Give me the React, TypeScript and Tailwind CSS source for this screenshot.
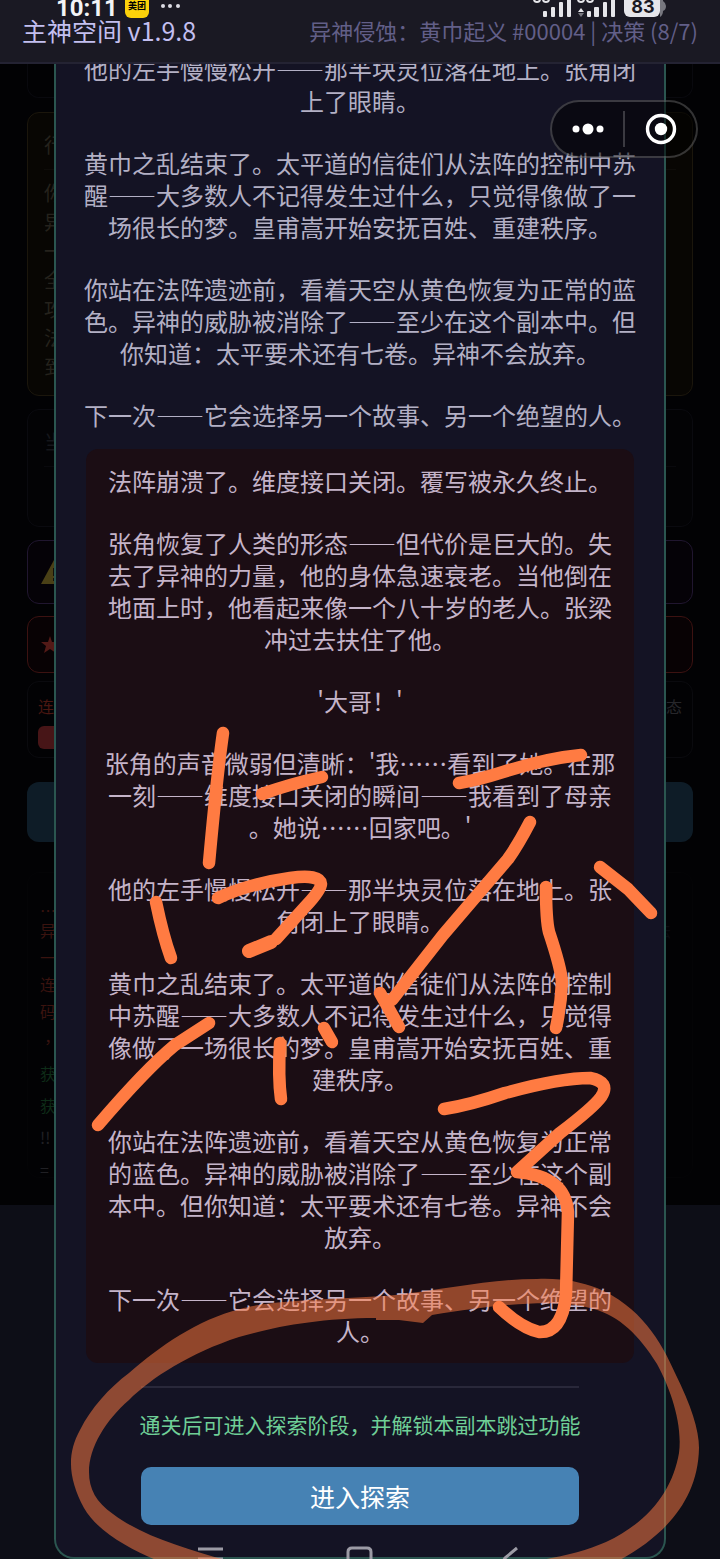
import React from 'react';

const EPILOGUE = [
  '他的左手慢慢松开——那半块灵位落在地上。张角闭上了眼睛。',
  '黄巾之乱结束了。太平道的信徒们从法阵的控制中苏醒——大多数人不记得发生过什么，只觉得像做了一场很长的梦。皇甫嵩开始安抚百姓、重建秩序。',
  '你站在法阵遗迹前，看着天空从黄色恢复为正常的蓝色。异神的威胁被消除了——至少在这个副本中。但你知道：太平要术还有七卷。异神不会放弃。',
  '下一次——它会选择另一个故事、另一个绝望的人。',
];

const ENDING = [
  '法阵崩溃了。维度接口关闭。覆写被永久终止。',
  '张角恢复了人类的形态——但代价是巨大的。失去了异神的力量，他的身体急速衰老。当他倒在地面上时，他看起来像一个八十岁的老人。张梁冲过去扶住了他。',
  "'大哥！'",
  "张角的声音微弱但清晰：'我……看到了她。在那一刻——维度接口关闭的瞬间——我看到了母亲。她说……回家吧。'",
  ...EPILOGUE,
];

const STROKES = [
  'M223 733 Q217 775 209 863',
  'M262 794 Q290 784 322 777',
  'M218 898 Q248 884 290 878 Q320 874 321 884 Q321 890 305 907 L276 939',
  'M156 902 Q163 936 171 958',
  'M209 1023 L175 1045 Q146 1069 98 1125',
  'M280 1043 Q278 1077 281 1099',
  'M324 1028 L332 1042',
  'M459 783 Q478 780 503 772 Q548 758 581 755',
  'M530 822 Q518 845 508 859 L443 935 L392 1000',
  'M380 993 L399 1027',
  'M546 887 Q546 920 549 932 Q561 968 562 982 Q561 1005 556 1028',
  'M600 867 L628 889 L651 913',
  'M444 1109 Q470 1105 505 1093 Q560 1078 590 1078 Q611 1082 601 1097 Q594 1107 560 1133 L517 1172 Q565 1176 568 1212 L566 1295 Q562 1333 539 1332 Q521 1328 499 1307',
];

const StatusBar: React.FC = () => (
  <div className="flex h-[18px] items-end justify-between overflow-hidden pl-14 pr-[54px]">
    <div className="flex items-end">
      <span className="w-[69px] font-['Roboto',sans-serif] text-2xl font-bold leading-5 text-gray-100">10:11</span>
      <span className="flex h-6 w-6 items-center justify-center rounded-md bg-[#fcd20a] text-[9px] font-bold text-black">美团</span>
      <svg width="32" height="18" viewBox="0 0 32 18" fill="#dddde5">
        <circle cx="14" cy="6" r="2" />
        <circle cx="21" cy="6" r="2" />
        <circle cx="29" cy="6" r="2" />
      </svg>
    </div>
    <svg width="136" height="18" viewBox="530 0 136 18">
      <g fill="#e6e6ea">
        <rect x="543" y="11" width="4" height="6" rx="1" />
        <rect x="551" y="7" width="4" height="10" rx="1" />
        <rect x="559" y="2" width="4" height="15" rx="1" />
        <rect x="567" y="-3" width="4" height="20" rx="1" />
        <rect x="587" y="11" width="4" height="6" rx="1" />
        <rect x="594" y="7" width="5" height="10" rx="1" />
        <rect x="603" y="2" width="4" height="15" rx="1" />
        <rect x="611" y="-3" width="4" height="20" rx="1" />
        <path d="M578 12l3-4 3 4z" />
        <rect x="624" y="-8" width="36" height="25" rx="6" />
      </g>
      <path d="M578 13h6l-3 4zM660 17q3-2 3-6 3-1 3-5 0-3-3-5V-3h-3z" fill="#77777f" />
      <g fill="none" stroke="#e6e6ea" strokeWidth="2">
        <circle cx="537" cy="-1" r="3" />
        <circle cx="546" cy="-1" r="3" />
        <circle cx="581" cy="-1" r="3" />
        <circle cx="590" cy="-1" r="3" />
      </g>
      <text x="643" y="13" textAnchor="middle" fontFamily="Inter, sans-serif" fontSize="18" fontWeight="700" fill="#1a1923">83</text>
    </svg>
  </div>
);

const GameLog: React.FC = () => (
  <div className="mt-[30px] flex h-[306px] justify-between rounded-xl border border-[#040406] pl-3 pr-[21px] pt-[30px] text-base leading-[27px] text-[#3a130f]">
    <div>
      <div className="h-[14px] leading-[14px]">…</div>
      <p>异</p>
      <p>一</p>
      <p>连</p>
      <p>码</p>
      <p className="leading-[32px]">，</p>
      <p className="leading-[32px] text-[#0e2c18]">获</p>
      <p className="leading-[32px] text-[#0e2c18]">获</p>
      <p className="leading-[32px] text-[#202024]">!!</p>
      <p className="leading-[32px] text-[#202024]">=</p>
    </div>
    <p className="pt-[14px] text-[#0b0b10]">法</p>
  </div>
);

// the game screen, dimmed behind the dialog
const GameScreen: React.FC = () => (
  <div aria-hidden="true" className="col-start-1 row-start-1 bg-[#0d0e17]">
    <div className="h-[1141px] bg-[#020204] px-[27px]">
      <div className="h-[34px] rounded-b-xl border border-t-0 border-[#09090e]" />
      <div className="mt-[14px] h-[284px] rounded-xl border border-[#1b160c] bg-[#080603] px-4 pt-4 text-[#25221c]">
        <p className="border-b border-[#0e0c09] pb-2 text-xl leading-8">行</p>
        <div className="w-5 pt-2 text-xl leading-[29px]">你异一全攻法到</div>
      </div>
      <div className="mt-[13px] h-[118px] rounded-xl border border-[#0a0a0f] bg-[#030305] px-4 pt-4 text-xl leading-8 text-[#15161b]">
        <p className="border-b border-[#09090d] pb-2">当</p>
      </div>
      <div className="mt-[13px] flex h-[64px] items-center rounded-xl border border-[#20162f] bg-[#050207] px-[13px]">
        <svg width="26" height="26" viewBox="0 0 26 26">
          <path d="M13 1L26 25H0z" fill="#4a4016" />
          <path d="M13 9v8M13 19v3" stroke="#14100a" strokeWidth="2" />
        </svg>
      </div>
      <div className="mt-3 flex h-[57px] items-center rounded-xl border border-[#3c1211] bg-[#080204] px-[13px]">
        <svg width="18" height="18" viewBox="0 0 18 18">
          <path d="M9 0l2 6h7l-5 4 2 7-6-4-6 4 2-7-5-4h7z" fill="#531a17" />
        </svg>
      </div>
      <div className="mt-2 h-[77px] rounded-xl border border-[#0a0a0e] px-2.5 pt-2">
        <div className="flex justify-between text-base leading-8">
          <span className="text-[#4b1711]">连</span>
          <span className="text-[#27272b]">态</span>
        </div>
        <div className="mt-1 h-[23px] w-1/2 rounded-md bg-[#471517]" />
      </div>
      <div className="mt-6 h-[60px] rounded-xl bg-[#0e1c27]" />
      <GameLog />
    </div>
  </div>
);

const EndingDialog: React.FC = () => (
  <section
    role="dialog"
    aria-label="结局"
    className="relative col-start-1 row-start-1 mx-auto mb-px w-[85%] rounded-b-[20px] border-2 border-t-0 border-[#2b5650] bg-[#141324] px-6 pb-8 text-center text-2xl leading-8 [line-break:anywhere]"
  >
    <div className="-mt-[11px] flex flex-col gap-[30px] text-[#b3b0c5]">
      {EPILOGUE.map(text => <p key={text}>{text}</p>)}
    </div>
    <div className="mx-1.5 mt-[18px] flex flex-col gap-[30px] rounded-xl bg-[#1b0d14] p-4 text-[#c5b4c9]">
      {ENDING.map(text => <p key={text}>{text}</p>)}
    </div>
    <div className="mx-[61px] mt-[23px] flex flex-col items-center border-t-2 border-[#29283a] pt-5">
      <p className="whitespace-nowrap text-[21px] text-[#6fcf97]">通关后可进入探索阶段，并解锁本副本跳过功能</p>
      <button className="mt-[27px] h-[58px] w-full rounded-[10px] bg-[#4682b4] text-[25px] text-white">进入探索</button>
    </div>
  </section>
);

const Capsule: React.FC = () => (
  <div className="absolute right-[22px] top-[100px] z-30 flex h-[58px] w-[148px] items-center rounded-full border-2 border-white/20 bg-black/50">
    <button aria-label="更多" className="flex h-full flex-1 items-center justify-center">
      <svg width="32" height="12" viewBox="0 0 32 12" fill="#fff">
        <circle cx="4" cy="6" r="3.5" />
        <circle cx="16" cy="6" r="5.5" />
        <circle cx="28" cy="6" r="3.5" />
      </svg>
    </button>
    <div className="h-9 w-0.5 bg-white/20" />
    <button aria-label="关闭" className="flex h-full flex-1 items-center justify-center">
      <svg width="32" height="32" viewBox="0 0 32 32">
        <circle cx="16" cy="16" r="13.5" fill="none" stroke="#fff" strokeWidth="3.4" />
        <circle cx="16" cy="16" r="6.2" fill="#fff" />
      </svg>
    </button>
  </div>
);

const NavKeys: React.FC = () => (
  <svg
    className="pointer-events-none absolute bottom-0 left-0 z-10 w-full"
    viewBox="0 0 720 16"
    fill="none"
    stroke="#9c9ba5"
    strokeWidth="3"
  >
    <path d="M198 5h25M198 15h25M348 18V8q0-4 4-4h15q4 0 4 4v10M517 4l-12 10-3 5" />
  </svg>
);

const Scribble: React.FC = () => (
  <svg
    aria-hidden="true"
    className="pointer-events-none absolute inset-0 z-20 h-full w-full"
    viewBox="0 0 720 1559"
    preserveAspectRatio="xMidYMin meet"
  >
    <path
      fill="#ff7b42"
      fillOpacity="0.52"
      d="M156 1560C128 1548 97 1531 84 1508C69 1480 66 1455 80 1430C91 1408 109 1388 129 1373C160 1346 197 1320 240 1309C275 1299 350 1299 395 1295C448 1289 492 1279 537 1279C563 1278 580 1282 597 1288C640 1306 661 1341 675 1373C691 1405 699 1430 699 1448C698 1500 665 1535 620 1560H542C568 1555 588 1550 606 1542C651 1521 673 1488 679 1453C683 1422 669 1386 657 1364C639 1335 619 1316 594 1309C560 1298 500 1304 432 1315L423 1323L399 1320H376V1318C318 1318 274 1327 239 1337C190 1353 151 1378 129 1400C106 1420 89 1447 89 1472C89 1489 96 1502 113 1514C142 1536 187 1549 225 1560Z"
    />
    <g fill="none" stroke="#ff7b42" strokeWidth="12.5" strokeLinecap="round" strokeLinejoin="round">
      {STROKES.map(d => <path key={d} d={d} />)}
      <path d="M271 942L249 951" strokeWidth="14" />
    </g>
  </svg>
);

const App: React.FC = () => {
  return (
    <div lang="zh-CN" className="relative flex min-h-screen flex-col overflow-hidden bg-[#020204] font-['Noto_Sans_CJK_TC','Noto_Sans_CJK_SC',sans-serif]">
      <header className="relative z-10 h-16 border-b-2 border-[#242333] bg-[#1a1923]">
        <StatusBar />
        <div className="flex h-6 items-center justify-between whitespace-nowrap px-[22px]">
          <h1 className="text-[25px] leading-6 text-[#c3bff0]">主神空间 v1.9.8</h1>
          <span className="text-[22px] leading-6 text-[#625f88]">异神侵蚀：黄巾起义 #00004 | 决策 (8/7)</span>
        </div>
      </header>
      <main className="grid flex-1 grid-cols-1">
        <GameScreen />
        <EndingDialog />
      </main>
      <Capsule />
      <NavKeys />
      <Scribble />
    </div>
  );
};

export default App;
